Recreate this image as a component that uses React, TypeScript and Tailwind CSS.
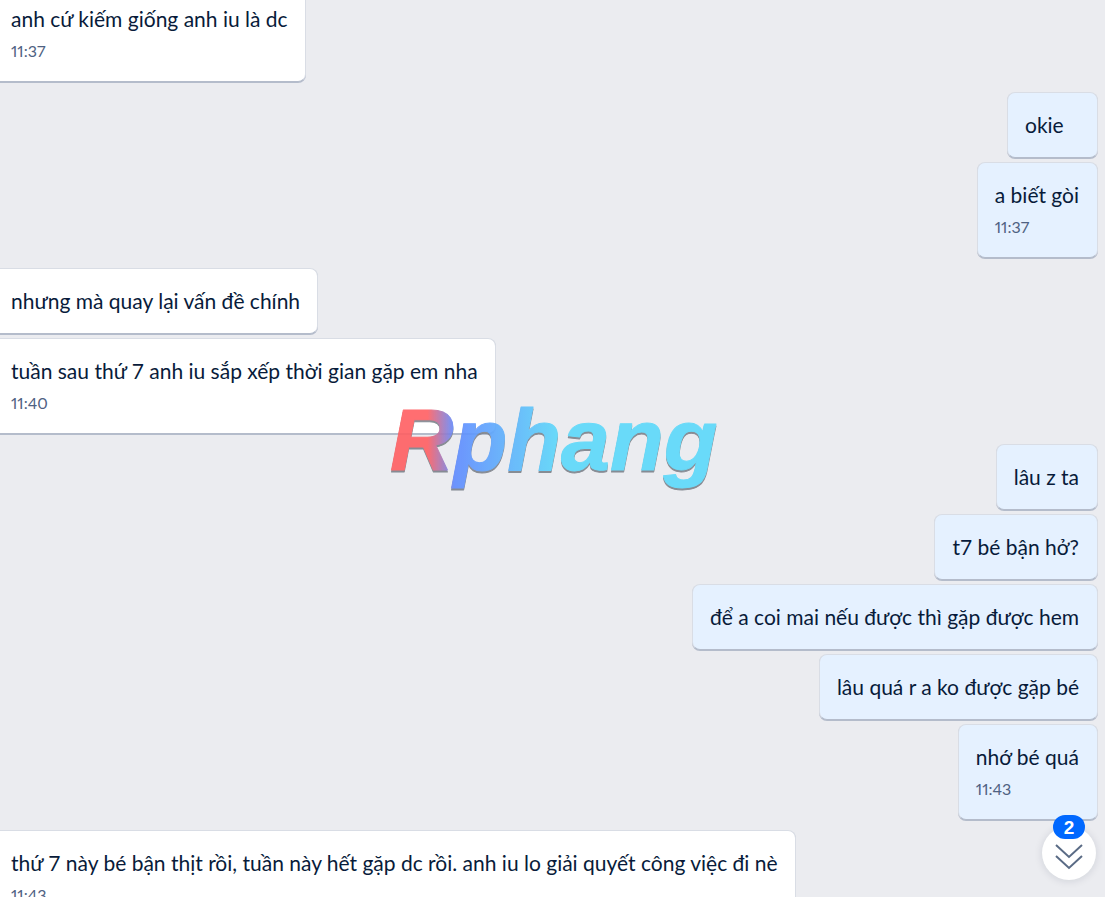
type Message = {
  text: string
  time?: string
}

type Group = {
  mine: boolean
  messages: Message[]
}

const groups: Group[] = [
  { mine: false, messages: [{ text: 'anh cứ kiếm giống anh iu là dc', time: '11:37' }] },
  { mine: true, messages: [{ text: 'okie' }, { text: 'a biết gòi', time: '11:37' }] },
  {
    mine: false,
    messages: [
      { text: 'nhưng mà quay lại vấn đề chính' },
      { text: 'tuần sau thứ 7 anh iu sắp xếp thời gian gặp em nha', time: '11:40' }
    ]
  },
  {
    mine: true,
    messages: [
      { text: 'lâu z ta' },
      { text: 't7 bé bận hở?' },
      { text: 'để a coi mai nếu được thì gặp được hem' },
      { text: 'lâu quá r a ko được gặp bé' },
      { text: 'nhớ bé quá', time: '11:43' }
    ]
  },
  {
    mine: false,
    messages: [
      { text: 'thứ 7 này bé bận thịt rồi, tuần này hết gặp dc rồi. anh iu lo giải quyết công việc đi nè', time: '11:43' }
    ]
  }
]

const Bubble = ({ text, time, mine }: Message & { mine: boolean }) => (
  <div
    className={`min-w-[91px] rounded-lg border border-[#d9dde5] border-b-[#b4bccb] pt-[19px] shadow-[0_1px_0_#b4bccb] ${
      mine ? 'bg-[#e5f1ff] pr-[18px] pl-[17px]' : 'bg-white px-[17px]'
    } ${time ? 'pb-5' : 'pb-[19px]'}`}
  >
    <p className="text-[21px] leading-[26px] text-[#081b3a]">{text}</p>
    {time && <time className="mt-[9px] block text-[16px] leading-5 text-[#4f6282] proportional-nums">{time}</time>}
  </div>
)

const Watermark = () => (
  <svg
    className="pointer-events-none absolute top-1/2 left-1/2 h-[140px] w-[360px] -translate-x-1/2 -translate-y-1/2 overflow-visible opacity-90"
    viewBox="0 0 360 140"
    aria-label="Rphang"
  >
    <defs>
      <linearGradient id="brand" gradientUnits="userSpaceOnUse" x1="15" y1="0" x2="345" y2="0">
        <stop offset="0.12" stopColor="#ff5f62" />
        <stop offset="0.2" stopColor="#5f8aff" />
        <stop offset="0.52" stopColor="#5cd9fa" />
      </linearGradient>
    </defs>
    <g
      fontFamily="'Liberation Sans', Arial, sans-serif"
      fontSize="88"
      fontWeight="700"
      fontStyle="italic"
      strokeWidth="1"
      strokeLinejoin="round"
    >
      <text x="17" y="93" fill="#7d828b" stroke="#7d828b">Rphang</text>
      <text x="17" y="91" fill="url(#brand)" stroke="url(#brand)">Rphang</text>
    </g>
  </svg>
)

const ScrollDown = ({ unread }: { unread: number }) => (
  <button
    type="button"
    aria-label="Tin nhắn mới"
    className="absolute right-[9px] bottom-[17px] flex size-[54px] items-center justify-center rounded-full bg-white shadow-[0_1px_8px_rgba(8,27,58,0.12)]"
  >
    <svg className="mt-2 h-[26px] w-7" viewBox="0 0 28 26" fill="none" stroke="#5a6b85" strokeWidth="2">
      <path d="M1 1l13 12L27 1M1 12l13 12 13-12" />
    </svg>
    <span className="absolute -top-[11px] left-[11px] h-6 w-8 rounded-full bg-[#0068ff] font-['Liberation_Sans',Arial,sans-serif] text-[19px] leading-[25px] font-bold text-white">
      {unread}
    </span>
  </button>
)

export default function App() {
  return (
    <main className="relative h-screen overflow-hidden bg-[#ebecf0] font-[Lato,'Noto_Sans',sans-serif]">
      <div className="-mt-3.5 -ml-[7px] flex flex-col gap-2.5 pr-[7px]">
        {groups.map(({ mine, messages }, index) => (
          <section key={index} className={`flex flex-col gap-1 ${mine ? 'items-end' : 'items-start'}`}>
            {messages.map((message) => (
              <Bubble key={message.text} mine={mine} {...message} />
            ))}
          </section>
        ))}
      </div>
      <Watermark />
      <ScrollDown unread={2} />
    </main>
  )
}
